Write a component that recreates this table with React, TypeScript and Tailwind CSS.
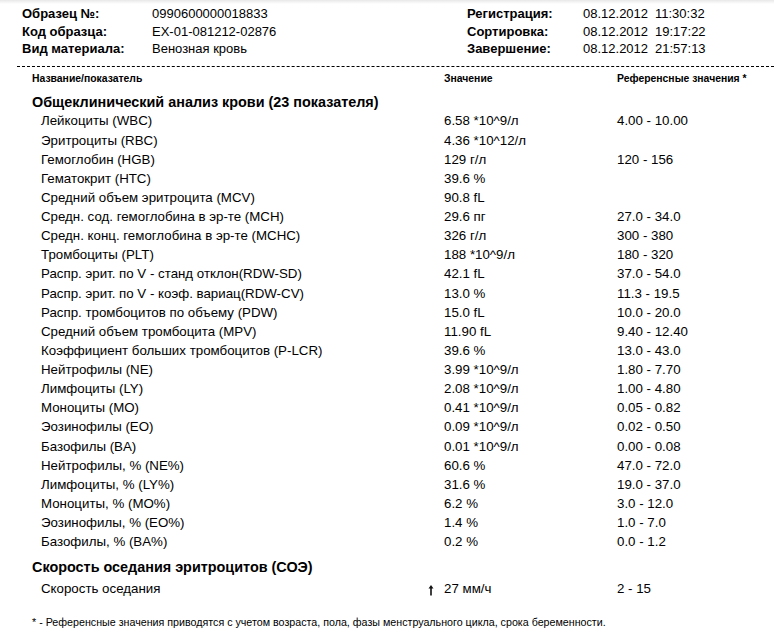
import React from "react";

type Row = { name: string; value: string; ref?: string; flag?: boolean };

const cbc: Row[] = [
  { name: "Лейкоциты (WBC)", value: "6.58 *10^9/л", ref: "4.00 - 10.00" },
  { name: "Эритроциты (RBC)", value: "4.36 *10^12/л" },
  { name: "Гемоглобин (HGB)", value: "129 г/л", ref: "120 - 156" },
  { name: "Гематокрит (HTC)", value: "39.6 %" },
  { name: "Средний объем эритроцита (MCV)", value: "90.8 fL" },
  { name: "Средн. сод. гемоглобина в эр-те (MCH)", value: "29.6 пг", ref: "27.0 - 34.0" },
  { name: "Средн. конц. гемоглобина в эр-те (MCHC)", value: "326 г/л", ref: "300 - 380" },
  { name: "Тромбоциты (PLT)", value: "188 *10^9/л", ref: "180 - 320" },
  { name: "Распр. эрит. по V - станд отклон(RDW-SD)", value: "42.1 fL", ref: "37.0 - 54.0" },
  { name: "Распр. эрит. по V - коэф. вариац(RDW-CV)", value: "13.0 %", ref: "11.3 - 19.5" },
  { name: "Распр. тромбоцитов по объему (PDW)", value: "15.0 fL", ref: "10.0 - 20.0" },
  { name: "Средний объем тромбоцита (MPV)", value: "11.90 fL", ref: "9.40 - 12.40" },
  { name: "Коэффициент больших тромбоцитов (P-LCR)", value: "39.6 %", ref: "13.0 - 43.0" },
  { name: "Нейтрофилы (NE)", value: "3.99 *10^9/л", ref: "1.80 - 7.70" },
  { name: "Лимфоциты (LY)", value: "2.08 *10^9/л", ref: "1.00 - 4.80" },
  { name: "Моноциты (MO)", value: "0.41 *10^9/л", ref: "0.05 - 0.82" },
  { name: "Эозинофилы (EO)", value: "0.09 *10^9/л", ref: "0.02 - 0.50" },
  { name: "Базофилы (BA)", value: "0.01 *10^9/л", ref: "0.00 - 0.08" },
  { name: "Нейтрофилы, % (NE%)", value: "60.6 %", ref: "47.0 - 72.0" },
  { name: "Лимфоциты, % (LY%)", value: "31.6 %", ref: "19.0 - 37.0" },
  { name: "Моноциты, % (MO%)", value: "6.2 %", ref: "3.0 - 12.0" },
  { name: "Эозинофилы, % (EO%)", value: "1.4 %", ref: "1.0 - 7.0" },
  { name: "Базофилы, % (BA%)", value: "0.2 %", ref: "0.0 - 1.2" },
];

const esr: Row[] = [{ name: "Скорость оседания", value: "27 мм/ч", ref: "2 - 15", flag: true }];

function UpArrow() {
  return (
    <svg width="6" height="12" viewBox="0 0 6 12" className="mr-[10px] mt-[3px] shrink-0">
      <path d="M3 1 L0.5 4.5 H2.2 V11.5 H3.8 V4.5 H5.5 Z" fill="#111" />
    </svg>
  );
}

function ResultRow({ row }: { row: Row }) {
  return (
    <div className="grid h-[19.14px] grid-cols-[412px_173px_1fr] items-center text-[13.3px] leading-none">
      <span className="pl-[9px]">{row.name}</span>
      <span className="flex items-center">
        {row.flag ? (
          <span className="-ml-[16px] flex w-[16px]">
            <UpArrow />
          </span>
        ) : null}
        {row.value}
      </span>
      <span>{row.ref}</span>
    </div>
  );
}

export default function App() {
  return (
    <div className="h-[640px] w-[774px] bg-white text-black" style={{ fontFamily: '"Liberation Sans", Arial, sans-serif' }}>
      <div className="h-[4px] bg-gradient-to-b from-[#e8e8e8] to-white" />

      {/* Header */}
      <div className="flex pt-[1px] text-[13px] leading-[17.5px]">
        <div className="grid w-[467px] grid-cols-[130px_1fr] pl-[22px]">
          <span className="font-bold">Образец №:</span>
          <span>0990600000018833</span>
          <span className="font-bold">Код образца:</span>
          <span>EX-01-081212-02876</span>
          <span className="font-bold">Вид материала:</span>
          <span>Венозная кровь</span>
        </div>
        <div className="grid grid-cols-[116px_72px_1fr]">
          <span className="font-bold">Регистрация:</span>
          <span>08.12.2012</span>
          <span>11:30:32</span>
          <span className="font-bold">Сортировка:</span>
          <span>08.12.2012</span>
          <span>19:17:22</span>
          <span className="font-bold">Завершение:</span>
          <span>08.12.2012</span>
          <span>21:57:13</span>
        </div>
      </div>

      <div className="ml-[17px] mt-[8px] border-t border-dashed border-black" />

      {/* Column titles */}
      <div className="mt-[6px] grid grid-cols-[412px_173px_1fr] pl-[32px] text-[10.4px] font-bold leading-[12px]">
        <span>Название/показатель</span>
        <span>Значение</span>
        <span>Референсные значения *</span>
      </div>

      <div className="pl-[32px]">
        <div className="mt-[8px] text-[14.4px] font-bold leading-[19px]">Общеклинический анализ крови (23 показателя)</div>
        {cbc.map((r) => (
          <ResultRow key={r.name} row={r} />
        ))}

        <div className="mt-[7px] text-[14.4px] font-bold leading-[19px]">Скорость оседания эритроцитов (СОЭ)</div>
        <div className="mt-[2px]">
          {esr.map((r) => (
            <ResultRow key={r.name} row={r} />
          ))}
        </div>

        <div
          className="mt-[16px] text-[10.7px] leading-[14px]"
          style={{ fontFamily: '"Liberation Sans Narrow", "Arial Narrow", "Liberation Sans", sans-serif' }}
        >
          * - Референсные значения приводятся с учетом возраста, пола, фазы менструального цикла, срока беременности.
        </div>
      </div>
    </div>
  );
}
